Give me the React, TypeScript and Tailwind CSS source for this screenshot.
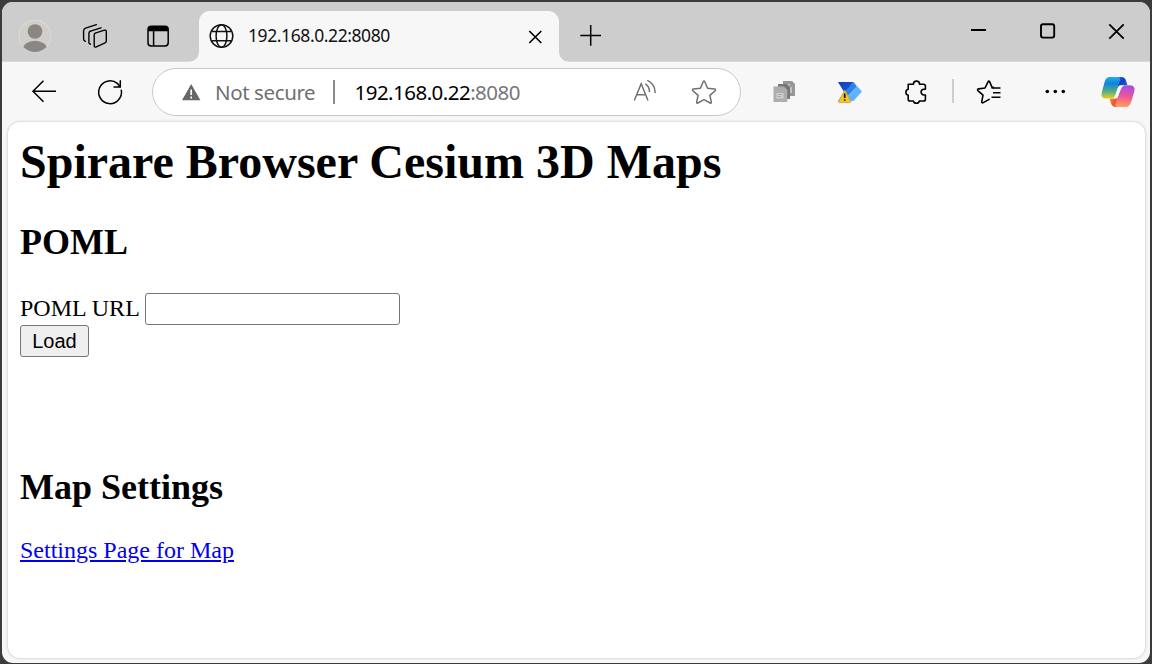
import React from "react";

function Avatar() {
  return (
    <svg className="ml-4 shrink-0" width="34" height="34" viewBox="18 19 34 34">
      <defs>
        <clipPath id="avatar-clip">
          <circle cx="35" cy="36" r="16" />
        </clipPath>
      </defs>
      <circle cx="35" cy="36" r="16" fill="#cfcec9" stroke="#dddcd9" strokeWidth="1" />
      <g clipPath="url(#avatar-clip)" fill="#8a8684">
        <circle cx="35" cy="31.5" r="7.3" />
        <ellipse cx="35" cy="50" rx="12.6" ry="9.3" />
      </g>
    </svg>
  );
}

function WorkspacesIcon() {
  return (
    <svg className="ml-[30px] shrink-0" width="26" height="26" viewBox="82 23 26 26" fill="none" stroke="#000" strokeWidth="1.4" strokeLinecap="round" strokeLinejoin="round">
      <path d="M95.2 33.2 104.4 30.2Q106.3 29.7 106.3 31.6V40.8Q106.3 42.3 105 42.9L96.4 46.9Q94.2 47.7 94.2 45.6V35Q94.2 33.6 95.2 33.2Z" />
      <path d="M101 27.8 91.2 30.8Q88.9 31.4 88.9 33.2V42.6Q88.9 43.9 90.4 44.2" />
      <path d="M96.4 24.7 85.6 28.2Q83.6 28.9 83.6 31V38.8Q83.6 40.8 85.4 41.4" />
    </svg>
  );
}

function TabActionsIcon() {
  return (
    <svg className="ml-[38px] shrink-0" width="24" height="24" viewBox="146 24 24 24" fill="none" stroke="#000" strokeWidth="1.5">
      <rect x="148" y="26.2" width="20.2" height="19.8" rx="3.2" />
      <path d="M148.5 31V29Q148.5 26.5 151.5 26.5H164.8Q167.8 26.5 167.8 29V31Z" fill="#000" stroke="none" />
      <path d="M148 30.5H168M153.6 31V46" />
    </svg>
  );
}

function GlobeIcon() {
  return (
    <svg className="-mt-px ml-[9px] shrink-0" width="28" height="28" viewBox="208 22 28 28" fill="none" stroke="#111" strokeWidth="1.5">
      <circle cx="221.5" cy="36" r="11.3" />
      <ellipse cx="221.5" cy="36" rx="5.4" ry="11.3" />
      <path d="M211.7 31.5H231.3M211.7 40.8H231.3" />
    </svg>
  );
}

function TabBar() {
  return (
    <div className="flex h-[60px] shrink-0 items-end border-b border-[#d9d9d9] bg-[#cdcdcd]">
      <div className="flex h-[51px] items-center">
        <div className="flex items-center">
          <Avatar />
          <WorkspacesIcon />
          <TabActionsIcon />
        </div>
      </div>
      <svg className="ml-[19px] -mb-px shrink-0" width="10" height="10" viewBox="0 0 10 10">
        <path d="M10 0V10H0A10 10 0 0 0 10 0Z" fill="#f7f7f7" />
      </svg>
      <div className="-mb-px flex h-[51px] w-[360px] shrink-0 items-center rounded-t-[11px] bg-[#f7f7f7]">
        <GlobeIcon />
        <span className="-mt-1 ml-3 whitespace-nowrap font-['Noto_Sans',sans-serif] text-[17.5px] leading-6 tracking-[-0.41px] text-[#111]">192.168.0.22:8080</span>
        <svg className="ml-auto mr-4 shrink-0" width="16" height="16" viewBox="527 29 16 16" stroke="#000" strokeWidth="1.6">
          <path d="M529.3 31 541.3 43M541.3 31 529.3 43" />
        </svg>
      </div>
      <svg className="-mb-px shrink-0" width="10" height="10" viewBox="0 0 10 10">
        <path d="M0 0V10H10A10 10 0 0 1 0 0Z" fill="#f7f7f7" />
      </svg>
      <svg className="mb-[13px] ml-[10px] shrink-0" width="24" height="24" viewBox="579 24 24 24" stroke="#000" strokeWidth="1.5">
        <path d="M580.3 35.5H601M590.7 25V45.7" />
      </svg>
      <div className="mb-5 ml-auto mr-6 flex shrink-0 gap-[51px]">
        <svg width="18" height="20" viewBox="970 21 18 20">
          <path d="M971 30H986" stroke="#000" strokeWidth="2" />
        </svg>
        <svg width="18" height="20" viewBox="1039 21 18 20">
          <rect x="1041" y="24.2" width="13.2" height="13.4" rx="2" fill="none" stroke="#000" strokeWidth="1.9" />
        </svg>
        <svg width="18" height="20" viewBox="1108 21 18 20">
          <path d="M1109.3 24.3 1123.7 38.7M1123.7 24.3 1109.3 38.7" stroke="#000" strokeWidth="1.8" />
        </svg>
      </div>
    </div>
  );
}

function AddressBar() {
  return (
    <div className="ml-7 flex h-12 w-[589px] shrink-0 items-center rounded-full border border-[#c9c9c9] bg-white font-['Noto_Sans',sans-serif] text-[20.5px] leading-7">
      <svg className="ml-7 shrink-0" width="22" height="20" viewBox="181 82 22 20">
        <path d="M191.2 84 200.4 100.3H182Z" fill="#666" />
        <path d="M191.2 89.5V95M191.2 96.5V98.5" stroke="#fff" strokeWidth="1.7" />
      </svg>
      <span className="ml-[12px] w-[102px] whitespace-nowrap tracking-[-0.4px] text-[#707070]">Not secure</span>
      <span className="ml-4 h-6 w-[1.5px] bg-[#8b8b8b]" />
      <span className="ml-5 whitespace-nowrap tracking-[-0.53px] text-[#777]">
        <span className="text-black">192.168.0.22</span>:8080
      </span>
      <svg className="ml-auto shrink-0" width="26" height="26" viewBox="632 79 26 26" fill="none" stroke="#707070" strokeWidth="1.5">
        <path d="M634.3 100.5 641.2 83.7 648 100.5M636.7 94.8H645.8" />
        <path d="M645.8 84.2Q649.2 86.5 649.5 91.5M647.8 80.7Q654.6 84 655.2 92.5" strokeLinecap="round" />
      </svg>
      <svg className="ml-[33px] mr-[23px] shrink-0" width="26" height="26" viewBox="691 79 26 26" fill="none" stroke="#707070" strokeWidth="1.5" strokeLinejoin="round">
        <path d="M703.2 81.8Q704 80.4 704.8 81.8L707.6 88.2 714.5 89.1Q716.2 89.4 715.1 90.7L709.9 95.4 711.3 101.9Q711.6 103.6 710.2 103L704 99.7 697.8 103Q696.4 103.6 696.7 101.9L698.1 95.4 692.9 90.7Q691.8 89.4 693.5 89.1L700.4 88.2Z" />
      </svg>
    </div>
  );
}

function DocumentsIcon() {
  return (
    <svg className="ml-[30px] shrink-0" width="26" height="26" viewBox="771 79 26 26">
      <path d="M783 81H792L795 84V96H783Z" fill="#979797" />
      <path d="M786 84H790V87H792V93H786Z" fill="#c2c2c2" />
      <path d="M778 84H787L790 87V99H778Z" fill="#777" />
      <path d="M773.5 86.5H784L787.3 90V102H773.5Z" fill="#adadad" />
      <path d="M776.3 93H783.5V98.5H776.3Z" fill="#cecece" />
      <path d="M777.5 94.5H782M777.5 96.5H781" stroke="#aaa" strokeWidth="1" />
    </svg>
  );
}

function FlowIcon() {
  return (
    <svg className="ml-[39px] shrink-0" width="26" height="26" viewBox="836 79 26 26">
      <defs>
        <linearGradient id="flow-top" x1="0" y1="0" x2="1" y2="1">
          <stop offset="0" stopColor="#123ea8" />
          <stop offset="1" stopColor="#1762e8" />
        </linearGradient>
      </defs>
      <path d="M838 82H853.5L845 93.5Z" fill="url(#flow-top)" />
      <path d="M853.5 82 857 86.5 843 101H838L845.5 91Z" fill="#2f80ee" />
      <path d="M857 86 862 91.5 853.5 101H843.5Z" fill="#60b4ff" />
      <path d="M845 90 850.8 101.6Q850.8 102.6 849.8 102.6H839.3Q838.4 102.6 838.4 101.6Z" fill="#f7c51d" stroke="#bb9b48" strokeWidth="0.7" />
      <path d="M844.7 93.5V98M844.7 99.2V100.8" stroke="#111" strokeWidth="1.6" />
    </svg>
  );
}

function PuzzleIcon() {
  return (
    <svg className="ml-[41px] shrink-0" width="26" height="26" viewBox="904 79 26 26" fill="none" stroke="#000" strokeWidth="1.6" strokeLinejoin="round">
      <path d="M909.2 84.2H914.4A3.1 3.1 0 0 1 920.6 84.2H924.6Q926.4 84.2 926.4 86V89.2H925A2.9 2.9 0 0 0 925 95H926.4V99.2Q926.4 101 924.6 101H920.4A3.1 3.1 0 0 1 914.4 101H911Q909.2 101 909.2 99.2V95.2A3.1 3.1 0 0 1 909.2 89.2Z" />
    </svg>
  );
}

function FavoritesIcon() {
  return (
    <svg className="ml-[21.5px] shrink-0" width="28" height="28" viewBox="975 78 28 28" fill="none" stroke="#000" strokeWidth="1.6" strokeLinejoin="round" strokeLinecap="round">
      <path d="M993.4 87.4 992 87.2 989.7 81.9Q988.9 80.4 988 81.9L985 88 978.7 88.9Q976.7 89.3 978.1 90.8L983 95.2 981.8 101.4Q981.6 103.4 983.3 102.6L989.2 99.4" />
      <path d="M991.5 88H1000.5M993 92.8H1000.5M991.5 97.3H1000.5" strokeLinecap="butt" />
    </svg>
  );
}

function CopilotIcon() {
  return (
    <svg className="ml-[33px] shrink-0" width="36" height="34" viewBox="1100 75 36 34">
      <defs>
        <linearGradient id="cp-left" x1="0" y1="0" x2="0" y2="1">
          <stop offset="0" stopColor="#20b0ed" />
          <stop offset="0.3" stopColor="#1380dc" />
          <stop offset="0.65" stopColor="#4dae88" />
          <stop offset="1" stopColor="#f4cc15" />
        </linearGradient>
        <linearGradient id="cp-right" x1="0.5" y1="0" x2="0.4" y2="1">
          <stop offset="0" stopColor="#a54ee5" />
          <stop offset="0.5" stopColor="#ed559b" />
          <stop offset="1" stopColor="#ffa159" />
        </linearGradient>
        <linearGradient id="cp-top" x1="0" y1="0" x2="1" y2="0.6">
          <stop offset="0" stopColor="#1eb0ee" />
          <stop offset="0.6" stopColor="#1540c7" />
          <stop offset="1" stopColor="#1267db" />
        </linearGradient>
        <linearGradient id="cp-bottom" x1="0" y1="0" x2="1" y2="0.5">
          <stop offset="0" stopColor="#f0b22c" />
          <stop offset="0.5" stopColor="#ee5934" />
          <stop offset="1" stopColor="#ed6a57" />
        </linearGradient>
      </defs>
      <path d="M1112 77H1121.5Q1125 77 1126.2 81L1127.4 85.3H1122Q1118.8 85.3 1117.8 88L1113 92Z" fill="url(#cp-top)" />
      <path d="M1109.5 98.6 1111 103.2Q1112.2 107 1115.4 107H1122L1124.5 93 1119.6 96Q1118.7 98.6 1116 98.6Z" fill="url(#cp-bottom)" />
      <path d="M1109.4 77H1117.8Q1120.9 77 1119.8 80.8L1115.4 95Q1114.2 98.6 1110.8 98.6H1106Q1100.2 98.6 1102 91.5L1104.7 81.7Q1106 77 1109.4 77Z" fill="url(#cp-left)" />
      <path d="M1124.6 85.3H1129.8Q1136 85.3 1134.2 92L1131 102.3Q1129.5 107 1126 107H1117.6Q1114.6 107 1115.8 103.2L1120.2 88.9Q1121.4 85.3 1124.6 85.3Z" fill="url(#cp-right)" />
      <path d="M1119.6 85.5H1124.6Q1121.8 86.2 1121 88.9L1118 96.4Q1117 98.6 1113.3 98.4Q1115 97.5 1115.6 95L1118 87.5Q1118.6 85.8 1119.6 85.5Z" fill="#fff" />
    </svg>
  );
}

function Toolbar() {
  return (
    <div className="flex h-[60px] shrink-0 items-center bg-[#f7f7f7]">
      <svg className="ml-7 shrink-0" width="28" height="28" viewBox="30 78 28 28" fill="none" stroke="#000" strokeWidth="1.5">
        <path d="M43.5 80.8 33 91.3 43.5 101.8M33 91.3H56" />
      </svg>
      <svg className="ml-[38px] shrink-0" width="28" height="28" viewBox="96 78 28 28" fill="none" stroke="#000" strokeWidth="1.5" strokeLinecap="round">
        <path d="M121.3 90.2A11.4 11.4 0 1 1 117.3 83.4L120 86.6M120.3 80.8V87H114" />
      </svg>
      <AddressBar />
      <DocumentsIcon />
      <FlowIcon />
      <PuzzleIcon />
      <span className="-mt-0.5 ml-[23px] h-6 w-[1.5px] shrink-0 bg-[#cecece]" />
      <FavoritesIcon />
      <svg className="ml-10 shrink-0" width="24" height="24" viewBox="1043 80 24 24">
        <circle cx="1047.3" cy="91.5" r="1.8" />
        <circle cx="1055.3" cy="91.5" r="1.8" />
        <circle cx="1063.3" cy="91.5" r="1.8" />
      </svg>
      <CopilotIcon />
    </div>
  );
}

function Page() {
  return (
    <main className="ml-1.5 mr-[5px] h-[536px] shrink-0 rounded-xl bg-white px-3 pt-3 font-['Liberation_Serif',serif] text-2xl leading-8 text-black shadow-[0_0_3px_rgba(0,0,0,0.25)]">
      <h1 className="text-[48px] font-bold leading-[55px]">Spirare Browser Cesium 3D Maps</h1>
      <h2 className="mt-[33px] text-4xl font-bold leading-[41px]">POML</h2>
      <div className="mt-[30px] flex h-8 items-center">
        <label htmlFor="poml-url" className="-mt-0.5 w-[119px] whitespace-nowrap">POML URL</label>
        <input id="poml-url" className="ml-1.5 h-8 w-[255px] rounded-[3px] border border-[#767676] bg-white px-1 font-['Liberation_Sans',sans-serif] text-xl" />
      </div>
      <button className="block h-8 w-[69px] rounded-[3px] border border-[#767676] bg-[#efefef] text-center font-['Liberation_Sans',sans-serif] text-xl leading-[30px]">Load</button>
      <h2 className="mt-[110px] text-4xl font-bold leading-[41px]">Map Settings</h2>
      <a href="#settings" className="mt-[26px] block w-fit text-[#0000ee] underline">Settings Page for Map</a>
    </main>
  );
}

export default function App() {
  return (
    <div className="h-[664px] w-[1152px] overflow-hidden bg-[#3b3b3b] px-0.5 pb-px pt-0.5">
      <div className="flex h-[661px] w-[1148px] flex-col overflow-hidden rounded-[11px] bg-[#f7f7f7]">
        <TabBar />
        <Toolbar />
        <Page />
      </div>
    </div>
  );
}
